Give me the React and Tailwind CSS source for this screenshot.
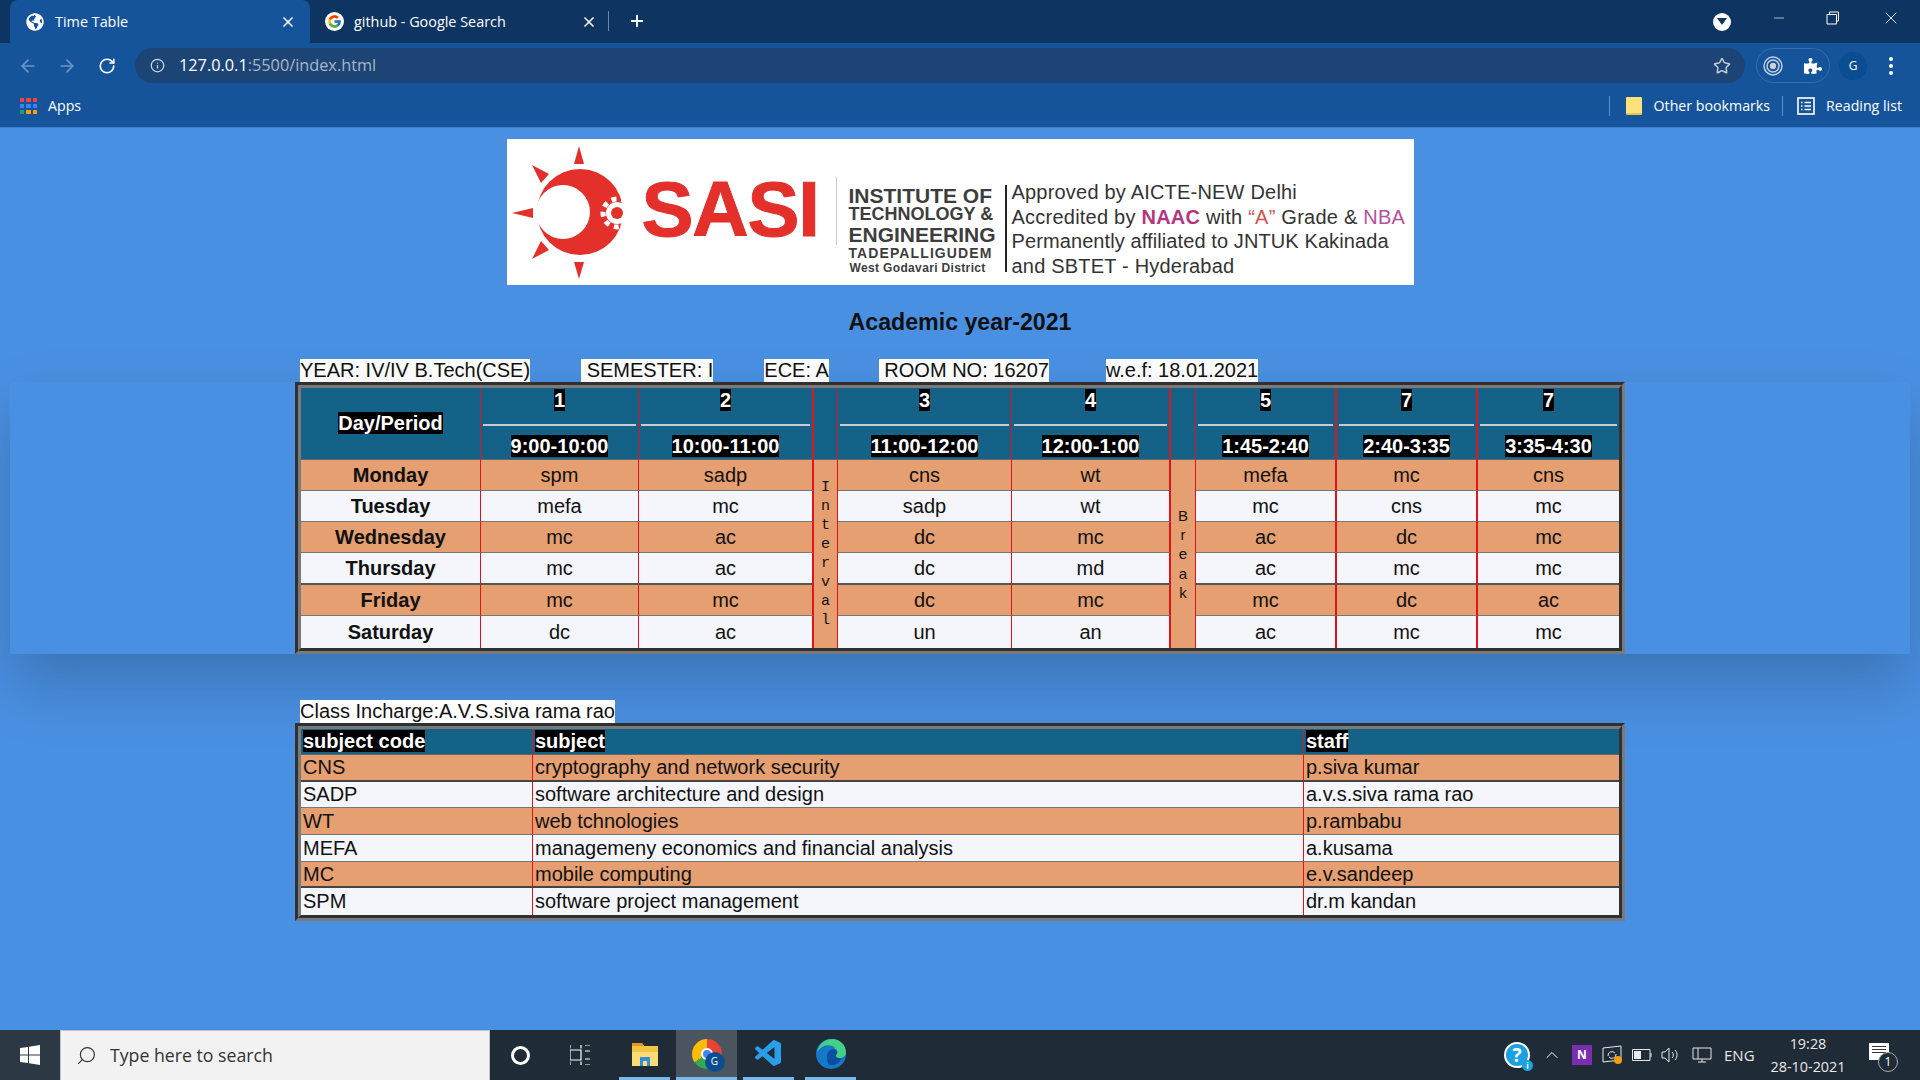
import React from 'react';
import { ArrowLeft, ArrowRight, RotateCw, Info, Star, Plus, X, Minus, Search, ChevronUp } from 'lucide-react';
import { FcGoogle } from 'react-icons/fc';
import { FaGlobeAmericas, FaPuzzlePiece } from 'react-icons/fa';
import { VscVscode } from 'react-icons/vsc';

const periods = [
  { no: '1', time: '9:00-10:00', line: 'border-r border-r-[#e0141c]' },
  { no: '2', time: '10:00-11:00', line: 'border-r-2 border-r-[#e0141c]' },
  { no: 'interval' },
  { no: '3', time: '11:00-12:00', line: 'border-r border-r-[#e0141c]' },
  { no: '4', time: '12:00-1:00', line: 'border-r-2 border-r-[#e0141c]' },
  { no: 'break' },
  { no: '5', time: '1:45-2:40', line: 'border-r-2 border-r-[#e0141c]' },
  { no: '7', time: '2:40-3:35', line: 'border-r-2 border-r-[#e0141c]' },
  { no: '7', time: '3:35-4:30', line: '' },
];

const lines = ['border-r border-r-[#e0141c]', 'border-r-2 border-r-[#e0141c]', 'border-r border-r-[#e0141c]', 'border-r-2 border-r-[#e0141c]', 'border-r-2 border-r-[#e0141c]', 'border-r-2 border-r-[#e0141c]', ''];

const days = [
  { day: 'Monday', cells: ['spm', 'sadp', 'cns', 'wt', 'mefa', 'mc', 'cns'], h: 'h-[31px]', edge: 'border-b border-b-[#777]' },
  { day: 'Tuesday', cells: ['mefa', 'mc', 'sadp', 'wt', 'mc', 'cns', 'mc'], h: 'h-[31px]', edge: 'border-b border-b-[#777]' },
  { day: 'Wednesday', cells: ['mc', 'ac', 'dc', 'mc', 'ac', 'dc', 'mc'], h: 'h-[31px]', edge: 'border-b border-b-[#777]' },
  { day: 'Thursday', cells: ['mc', 'ac', 'dc', 'md', 'ac', 'mc', 'mc'], h: 'h-[32px]', edge: 'border-b-2 border-b-[#555]' },
  { day: 'Friday', cells: ['mc', 'mc', 'dc', 'mc', 'mc', 'dc', 'ac'], h: 'h-[31px]', edge: 'border-b border-b-[#777]' },
  { day: 'Saturday', cells: ['dc', 'ac', 'un', 'an', 'ac', 'mc', 'mc'], h: 'h-[32px]', edge: '' },
];

const subjects = [
  ['CNS', 'cryptography and network security', 'p.siva kumar', 'border-b-2 border-b-[#444]', 'h-[27px]'],
  ['SADP', 'software architecture and design', 'a.v.s.siva rama rao', 'border-b border-b-[#777]', 'h-[26px]'],
  ['WT', 'web tchnologies', 'p.rambabu', 'border-b border-b-[#777]', 'h-[27px]'],
  ['MEFA', 'managemeny economics and financial analysis', 'a.kusama', 'border-b border-b-[#777]', 'h-[27px]'],
  ['MC', 'mobile computing', 'e.v.sandeep', 'border-b-2 border-b-[#444]', 'h-[26px]'],
  ['SPM', 'software project management', 'dr.m kandan', '', 'h-[27px]'],
];

const Mark = ({ children }) => <span className="bg-black text-white">{children}</span>;
const Label = ({ className = '', children }) => <span className={`bg-white text-[#111] whitespace-pre ${className}`}>{children}</span>;

function Frame({ children }) {
  return (
    <div className="border-[3px] border-t-[#303030] border-l-[#303030] border-r-[#7a7a7a] border-b-[#7a7a7a]">
      <div className="border-[3px] border-t-[#7a7a7a] border-l-[#7a7a7a] border-r-[#303030] border-b-[#303030]">{children}</div>
    </div>
  );
}

function Sun() {
  return (
    <svg viewBox="512 145 112 133" className="w-[112px] h-[133px] shrink-0">
      <g fill="#e3302b">
        <polygon points="579,145 574,163 584,163" />
        <polygon points="579,278 574,261 584,261" />
        <polygon points="512,212 533,207 533,217" />
        <polygon points="532,164 541,182 549,173" />
        <polygon points="532,258 541,240 549,249" />
        <circle cx="580" cy="211" r="43" />
      </g>
      <circle cx="563" cy="211" r="27" fill="#fff" />
      <circle cx="617" cy="212" r="11" fill="#fff" />
      <circle cx="617" cy="212" r="14" fill="none" stroke="#fff" strokeWidth="5" strokeDasharray="5 5" />
      <circle cx="617" cy="212" r="6" fill="#e3302b" />
    </svg>
  );
}

function Logo() {
  return (
    <div className="w-[907px] h-[146px] bg-white flex pl-[5px] items-center font-['Liberation_Sans',sans-serif] overflow-hidden">
      <Sun />
      <div className="w-[194px] ml-[18px] text-[78px] leading-none font-bold text-[#e3302b] tracking-[-1.2px] mt-[-6px] [-webkit-text-stroke:1px_#e3302b]">SASI</div>
      <div className="w-px h-[68px] bg-[#ccc] mt-[-3px]" />
      <div className="w-[168px] pl-3 self-start mt-[47px] font-bold text-[#3d3d3d] whitespace-nowrap">
        <div className="text-[21px] leading-[19px]">INSTITUTE OF</div>
        <div className="text-[18px] leading-[19px]">TECHNOLOGY &amp;</div>
        <div className="text-[21px] leading-[22px]">ENGINEERING</div>
        <div className="text-[14px] leading-[14px] tracking-[1.1px]">TADEPALLIGUDEM</div>
        <div className="text-[12px] leading-[16px] tracking-[0.35px] ml-px">West Godavari District</div>
      </div>
      <div className="w-0.5 h-[87px] bg-[#222] self-start mt-[46px]" />
      <div className="pl-[5px] self-start mt-[41px] text-[20px] leading-[24.5px] text-[#333] whitespace-nowrap">
        <div className="tracking-[0.2px]">Approved by AICTE-NEW Delhi</div>
        <div className="tracking-[0.23px]">Accredited by <b className="text-[#b5367e]">NAAC</b> with <span className="text-[#d9504c]">“A”</span> Grade &amp; <span className="text-[#b84f9c]">NBA</span></div>
        <div className="tracking-[0.1px]">Permanently affiliated to JNTUK Kakinada</div>
        <div className="tracking-[0.2px]">and SBTET - Hyderabad</div>
      </div>
    </div>
  );
}

function TimeTable() {
  return (
    <table className="w-[1318px] table-fixed border-separate border-spacing-0 text-[20px] text-[#111] text-center leading-[23px]">
      <colgroup>
        <col className="w-[180px]" /><col className="w-[158px]" /><col className="w-[175px]" /><col className="w-[24px]" /><col className="w-[174px]" />
        <col className="w-[159px]" /><col className="w-[25px]" /><col className="w-[141px]" /><col className="w-[141px]" /><col className="w-[141px]" />
      </colgroup>
      <thead className="bg-[#156289]">
        <tr className="h-[36px]">
          <th rowSpan={2} className="border-r border-b border-r-[#e0141c] border-b-[#666] p-0"><Mark>Day/Period</Mark></th>
          {periods.map((p, i) => p.time ? (
            <th key={i} className={`p-0 pb-[12px] ${p.line}`}><Mark>{p.no}</Mark></th>
          ) : (
            <th key={i} rowSpan={2} className="p-0 border-b border-b-[#666] border-r border-r-[#e0141c]" />
          ))}
        </tr>
        <tr className="h-[36px]">
          {periods.filter(p => p.time).map((p, i) => (
            <th key={i} className={`p-0 align-top border-b border-b-[#666] ${p.line}`}>
              <div className="border-t-2 border-t-[#c8ccd0] mx-0.5 pt-[9px]"><Mark>{p.time}</Mark></div>
            </th>
          ))}
        </tr>
      </thead>
      <tbody>
        {days.map((d, r) => (
          <tr key={d.day} className={`${d.h} ${r % 2 === 0 ? 'bg-[#e59f71]' : 'bg-[#f4f6fb]'}`}>
            <td className={`p-0 font-bold border-r border-r-[#e0141c] ${d.edge}`}>{d.day}</td>
            {d.cells.map((c, i) => (
              <React.Fragment key={i}>
                <td className={`p-0 ${lines[i]} ${d.edge}`}>{c}</td>
                {r === 0 && i === 1 && (
                  <td rowSpan={6} className="p-0 bg-[#e59f71] border-r border-r-[#e0141c] font-['Liberation_Mono',monospace] text-[15px] leading-[19px]">
                    I<br />n<br />t<br />e<br />r<br />v<br />a<br />l
                  </td>
                )}
                {r === 0 && i === 3 && (
                  <td rowSpan={6} className="p-0 bg-[#e59f71] border-r border-r-[#e0141c] text-[15px] leading-[19.2px]">
                    B<br />r<br />e<br />a<br />k
                  </td>
                )}
              </React.Fragment>
            ))}
          </tr>
        ))}
      </tbody>
    </table>
  );
}

function SubjectTable() {
  return (
    <table className="w-[1318px] table-fixed border-separate border-spacing-0 text-[20px] text-[#111] text-left leading-[23px]">
      <colgroup><col className="w-[232px]" /><col className="w-[771px]" /><col className="w-[315px]" /></colgroup>
      <thead className="bg-[#156289]">
        <tr className="h-[26px]">
          <th className="p-0 pl-0.5 border-r border-r-[#e0141c] border-b border-b-[#666]"><Mark>subject code</Mark></th>
          <th className="p-0 pl-0.5 border-r border-r-[#e0141c] border-b border-b-[#666]"><Mark>subject</Mark></th>
          <th className="p-0 pl-0.5 border-b border-b-[#666]"><Mark>staff</Mark></th>
        </tr>
      </thead>
      <tbody>
        {subjects.map(([code, name, staff, edge, h], r) => (
          <tr key={code} className={`${h} ${r % 2 === 0 ? 'bg-[#e59f71]' : 'bg-[#f4f6fb]'}`}>
            <td className={`p-0 pl-0.5 border-r border-r-[#e0141c] ${edge}`}>{code}</td>
            <td className={`p-0 pl-0.5 border-r border-r-[#e0141c] ${edge}`}>{name}</td>
            <td className={`p-0 pl-0.5 ${edge}`}>{staff}</td>
          </tr>
        ))}
      </tbody>
    </table>
  );
}

function TabStrip() {
  return (
    <div className="h-[43px] bg-[#0e3461] flex text-white text-[14.4px] font-['Open_Sans',sans-serif] shrink-0">
      <div className="ml-2.5 w-[300px] bg-[#15549a] rounded-t-lg flex items-center pl-[16px] pr-[14px]">
        <FaGlobeAmericas className="w-[18px] h-[18px]" />
        <span className="ml-[11px] flex-1">Time Table</span>
        <X className="w-4 h-4" strokeWidth={2.5} />
      </div>
      <div className="w-[298px] flex items-center pl-[15px] pr-[11px]">
        <span className="w-[19px] h-[19px] bg-white rounded-full flex items-center justify-center"><FcGoogle className="w-[15px] h-[15px]" /></span>
        <span className="ml-[10px] flex-1">github - Google Search</span>
        <X className="w-4 h-4" strokeWidth={2.5} />
      </div>
      <div className="w-px h-[20px] bg-[#6f86a3] mt-[11px]" />
      <Plus className="w-[18px] h-[18px] ml-[19px] mt-3" strokeWidth={2.5} />
      <div className="ml-auto flex items-center text-white">
        <span className="w-[18px] h-[18px] bg-white rounded-full flex items-center justify-center mr-[40px]">
          <span className="border-x-[5px] border-x-transparent border-t-[7px] border-t-[#0e3461]" />
        </span>
        <Minus className="w-[16px] h-[16px] mt-[-8px]" strokeWidth={1} />
        <svg viewBox="0 0 14 14" className="w-[14px] h-[14px] ml-[39px] mt-[-8px]" fill="none" stroke="currentColor">
          <path d="M3.5 3V1h9v9h-2M1 3.5h9.5V13H1z" />
        </svg>
        <X className="w-[20px] h-[20px] ml-[41px] mr-[19px] mt-[-8px]" strokeWidth={1} />
      </div>
    </div>
  );
}

function Toolbar() {
  return (
    <div className="h-[43px] bg-[#15549a] flex items-center text-white shrink-0 pt-0.5">
      <ArrowLeft className="w-5 h-5 ml-[18px] text-[#6f95c5]" />
      <ArrowRight className="w-5 h-5 ml-[19px] text-[#6f95c5]" />
      <RotateCw className="w-[18px] h-[18px] ml-[21px]" strokeWidth={2.2} />
      <div className="ml-[19px] w-[1610px] h-[35px] rounded-full bg-[#1c4475] flex items-center pl-[15px] pr-[14px] text-[16.3px] font-['Open_Sans',sans-serif]">
        <Info className="w-[15px] h-[15px] text-[#cfd6df]" strokeWidth={2} />
        <span className="ml-[14px]">127.0.0.1<span className="text-[#a9b6c6]">:5500/index.html</span></span>
        <Star className="w-[18px] h-[18px] ml-auto text-[#c4ccd6]" strokeWidth={2} />
      </div>
      <div className="ml-[11px] w-[74px] h-[35px] rounded-full border border-[#3a6dab] flex items-center pl-[6px]">
        <svg viewBox="0 0 20 20" className="w-[20px] h-[20px]" fill="none" stroke="#c9d3df">
          <circle cx="10" cy="10" r="9" strokeWidth="1.4" /><circle cx="10" cy="10" r="6" strokeWidth="1.4" /><circle cx="10" cy="10" r="2.8" fill="#c9d3df" />
        </svg>
        <FaPuzzlePiece className="w-[18px] h-[18px] ml-[21px]" />
      </div>
      <div className="ml-[9px] w-7 h-7 rounded-full bg-[#0b4d93] flex items-center justify-center text-[12px] font-['Open_Sans',sans-serif]">G</div>
      <div className="ml-[22px] flex flex-col gap-[3px]">
        <span className="w-1 h-1 rounded-full bg-white" /><span className="w-1 h-1 rounded-full bg-white" /><span className="w-1 h-1 rounded-full bg-white" />
      </div>
    </div>
  );
}

function BookmarksBar() {
  const dots = ['#ef4444', '#ef4444', '#ef4444', '#3b82f6', '#3b82f6', '#3b82f6', '#22a05a', '#f59e0b', '#f59e0b'];
  return (
    <div className="h-[42px] bg-[#15549a] border-b border-[#3e7fcf] flex items-center text-white text-[14.2px] font-['Open_Sans',sans-serif] shrink-0 pb-0.5">
      <div className="ml-5 grid grid-cols-3 gap-[2px] w-[17px]">
        {dots.map((c, i) => <span key={i} className="h-[4px]" style={{ background: c }} />)}
      </div>
      <span className="ml-[11px]">Apps</span>
      <div className="ml-auto w-px h-[20px] bg-[#5f8cc4]" />
      <div className="ml-4 w-4 h-[18px] bg-[#fde27c] rounded-[1px] border-b-2 border-[#e8c34f]" />
      <span className="ml-3">Other bookmarks</span>
      <div className="ml-3 w-px h-[20px] bg-[#5f8cc4]" />
      <svg viewBox="0 0 18 18" className="w-[18px] h-[18px] ml-[14px]" fill="none" stroke="#fff" strokeWidth="1.6">
        <rect x="1" y="1" width="16" height="16" /><path d="M4 5.5h1.5M7.5 5.5H14M4 9h1.5M7.5 9H14M4 12.5h1.5M7.5 12.5H14" />
      </svg>
      <span className="ml-[11px] mr-[18px]">Reading list</span>
    </div>
  );
}

function Taskbar() {
  return (
    <div className="h-[50px] bg-[#1f2b36] flex items-stretch text-white shrink-0 font-['Open_Sans',sans-serif]">
      <div className="w-[60px] bg-[#2c3843] flex items-center justify-center">
        <svg viewBox="0 0 20 20" className="w-5 h-5" fill="#fff"><path d="M0 3l8-1.1V9.5H0zM9 1.7L20 0v9.5H9zM0 10.5h8v7.6L0 17zM9 10.5h11V20L9 18.3z" /></svg>
      </div>
      <div className="w-[430px] bg-[#f2f2f2] border-t border-x border-[#c4c4c4] flex items-center pl-[15px] text-[#333] text-[17.7px]">
        <Search className="w-[21px] h-[21px] -scale-x-100" strokeWidth={1.3} />
        <span className="ml-[13px]">Type here to search</span>
      </div>
      <div className="w-[60px] flex items-center justify-center">
        <span className="w-[19px] h-[19px] rounded-full border-[3px] border-white" />
      </div>
      <div className="w-[60px] flex items-center justify-center mr-[9px]">
        <svg viewBox="0 0 20 20" className="w-5 h-5" fill="none" stroke="#fff" strokeWidth="1.2">
          <path d="M0 3.5V0M11 3.5V0M0 20v-3.5M11 20v-3.5M0 5h11v10H0zM15 0h5M15 6h5M15 14h5M15 20h5" />
        </svg>
      </div>
      <div className="w-[51px] flex items-center justify-center border-b-[3px] border-[#76b9ed]">
        <svg viewBox="0 0 28 28" className="w-7 h-7">
          <path d="M1 3h10l2 3h14v20H1z" fill="#f4c542" /><path d="M1 3h10l2 3H1z" fill="#e39a1c" /><path d="M1 12h26v14H1z" fill="#fddc75" /><path d="M9 26v-9h10v9h-3v-5h-4v5z" fill="#2f8fd8" />
        </svg>
      </div>
      <div className="w-[61px] ml-1.5 bg-[#4a555f] flex items-center justify-center border-b-[3px] border-[#76b9ed]">
        <span className="relative w-[30px] h-[30px] rounded-full bg-[conic-gradient(#ea4335_0_33%,#34a853_33%_66%,#fbbc05_66%_100%)] flex items-center justify-center">
          <span className="w-3 h-3 rounded-full bg-[#4285f4] border-2 border-white" />
          <span className="absolute right-[-3px] bottom-[-3px] w-[20px] h-[20px] rounded-full bg-[#0b4d93] text-[10px] flex items-center justify-center">G</span>
        </span>
      </div>
      <div className="w-[51px] ml-1.5 flex items-center justify-center border-b-[3px] border-[#76b9ed]">
        <VscVscode className="w-8 h-8 text-[#2a9fe8]" />
      </div>
      <div className="w-[51px] ml-[11px] flex items-center justify-center border-b-[3px] border-[#76b9ed]">
        <svg viewBox="0 0 30 30" className="w-[30px] h-[30px]">
          <circle cx="15" cy="15" r="15" fill="#1578c8" />
          <path d="M1 13C3 4 10 0 16 0c8 0 14 6 14 13 0 4-3 6-7 6-3 0-5-1-5-3 0-4 2-5 0-8-3-3-12-3-17 5z" fill="#45d08a" />
          <path d="M11 17c0-4 3-7 7-7 3 0 4 3 3 5-3 2 0 5 5 4-3 6-8 8-12 7-3-1-3-6-3-9z" fill="#0d4f9f" />
        </svg>
      </div>
      <div className="ml-auto flex items-center">
        <span className="relative w-[26px] h-[26px] rounded-full bg-[#1ba1e2] border-2 border-white flex items-center justify-center text-[19px] font-bold leading-none">?
          <span className="absolute right-[-5px] bottom-[-5px] w-[11px] h-[11px] rounded-full bg-[#1ba1e2] text-[8px] flex items-center justify-center">i</span>
        </span>
        <ChevronUp className="w-[20px] h-[20px] ml-[12px]" strokeWidth={1.2} />
        <span className="ml-[10px] w-5 h-5 bg-[#7b2fb0] text-[12px] font-bold flex items-center justify-center">N</span>
        <svg viewBox="0 0 20 20" className="w-5 h-5 ml-[10px]" fill="none" stroke="#e8e8e8">
          <path d="M1 3l18-2v14l-18 2zM6 11a4 4 0 017-3M14 9a4 4 0 01-7 3" /><circle cx="16" cy="15" r="4" fill="#f59e0b" stroke="none" />
        </svg>
        <svg viewBox="0 0 20 12" className="w-5 h-3 ml-[10px]" fill="none" stroke="#e8e8e8">
          <path d="M.5.5h17.5v11H.5zM19 4v4" /><rect x="2" y="2" width="7" height="8" fill="#e8e8e8" stroke="none" />
        </svg>
        <svg viewBox="0 0 20 20" className="w-5 h-5 ml-[9px]" fill="none" stroke="#e8e8e8">
          <path d="M1 7h3l4-4v14l-4-4H1zM11 7a4 4 0 010 6M14 5a7 7 0 010 10" />
        </svg>
        <svg viewBox="0 0 20 20" className="w-5 h-5 ml-[11px]" fill="none" stroke="#e8e8e8">
          <path d="M1 3h5v11M6 3h13v11H1V3M10 14v3M6 17h8" />
        </svg>
        <span className="ml-[12px] w-[31px] text-[15px] text-[#e8e8e8]">ENG</span>
        <div className="ml-[10px] w-[86px] text-center text-[14.4px] leading-[23px] text-[#e8e8e8] whitespace-nowrap">
          <div>19:28</div>
          <div>28-10-2021</div>
        </div>
        <span className="relative ml-[18px] w-5 h-[17px] bg-white mt-[-8px] mr-[31px] flex flex-col gap-[2px] pt-[3px] px-[3px]">
          <span className="h-px bg-[#333]" /><span className="h-px bg-[#333]" /><span className="h-px bg-[#333]" />
          <span className="absolute left-[9px] top-[9px] w-[20px] h-[20px] rounded-full bg-[#1f2b36] border border-[#aaa] text-[12px] text-white flex items-center justify-center">1</span>
        </span>
      </div>
    </div>
  );
}

export default function App() {
  return (
    <div className="w-[1920px] h-[1080px] flex flex-col overflow-hidden bg-[#4a90e2]">
      <TabStrip />
      <Toolbar />
      <BookmarksBar />
      <main className="flex-1 flex flex-col items-center pt-[11px] font-['Liberation_Sans',Arial,sans-serif] text-[20px] leading-[23px]">
        <Logo />
        <h3 className="mt-[24px] h-[27px] text-[23.2px] leading-[27px] font-bold text-[#111]">Academic year-2021</h3>
        <div className="mt-[23px] w-[1330px] pl-[5px] flex h-[23px]">
          <Label>YEAR: IV/IV B.Tech(CSE)</Label>
          <Label className="ml-[51px]"> SEMESTER: I</Label>
          <Label className="ml-[51px]">ECE: A</Label>
          <Label className="ml-[50px]"> ROOM NO: 16207</Label>
          <Label className="ml-[57px]">w.e.f: 18.01.2021</Label>
        </div>
        <section className="self-stretch mx-2.5 flex justify-center bg-[#4a90e2] shadow-[0_30px_60px_rgba(0,0,0,0.2)]">
          <Frame><TimeTable /></Frame>
        </section>
        <div className="relative mt-[46px] w-[1330px] pl-[5px] h-[23px] flex">
          <Label>Class Incharge:A.V.S.siva rama rao</Label>
        </div>
        <div className="relative">
          <Frame><SubjectTable /></Frame>
        </div>
      </main>
      <Taskbar />
    </div>
  );
}
